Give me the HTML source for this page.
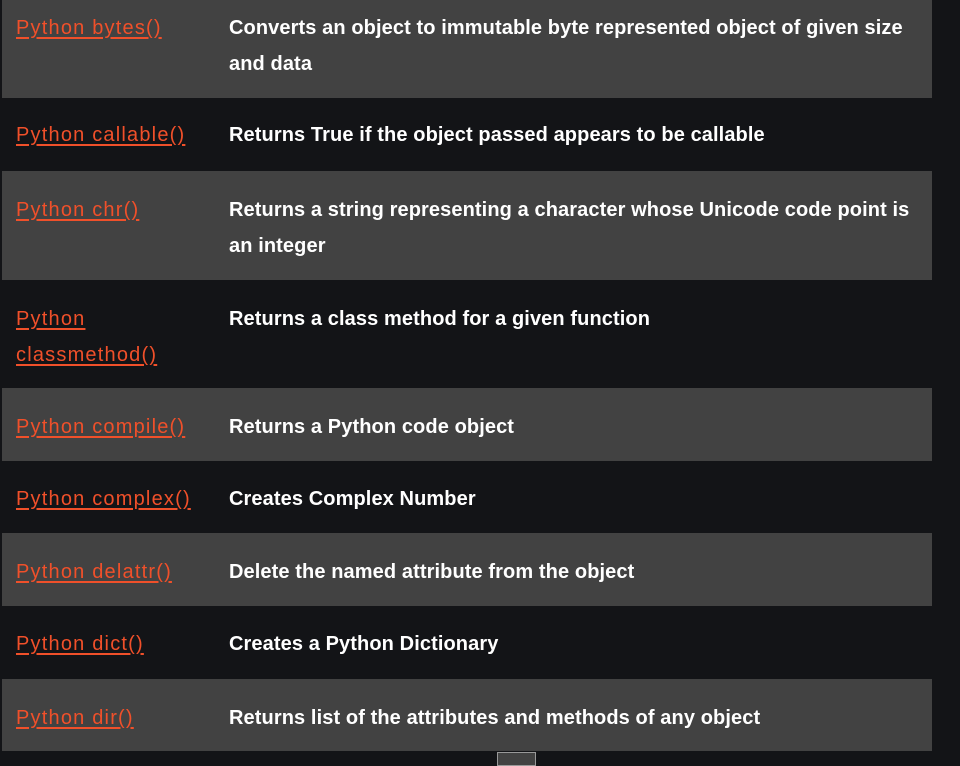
<!DOCTYPE html>
<html><head><meta charset="utf-8"><style>
body{margin:0;width:960px;height:762px;background:#131417;overflow:hidden;position:relative;font-family:"Liberation Sans",sans-serif;color:#fff;}
.r{position:absolute;left:2px;width:930px;}
.g{background:#424242;}
.a{position:absolute;left:14px;width:180px;color:#f0502a;text-decoration:underline;text-underline-offset:3px;line-height:36px;font-size:20px;letter-spacing:1.2px;}
.b{position:absolute;left:227px;width:688px;line-height:36px;font-size:20px;font-weight:bold;letter-spacing:0.1px;}
</style></head><body>
<div class="r g" style="top:0;height:98px"><div class="a" style="top:10px">Python bytes()</div><div class="b" style="top:10px">Converts an object to immutable byte represented object of given size and data</div></div>
<div class="r" style="top:98px;height:73px"><div class="a" style="top:19px">Python callable()</div><div class="b" style="top:19px">Returns True if the object passed appears to be callable</div></div>
<div class="r g" style="top:171px;height:109px"><div class="a" style="top:21px">Python chr()</div><div class="b" style="top:21px">Returns a string representing a character whose Unicode code point is an integer</div></div>
<div class="r" style="top:280px;height:108px"><div class="a" style="top:21px;width:120px">Python classmethod()</div><div class="b" style="top:21px">Returns a class method for a given function</div></div>
<div class="r g" style="top:388px;height:73px"><div class="a" style="top:21px">Python compile()</div><div class="b" style="top:21px">Returns a Python code object</div></div>
<div class="r" style="top:461px;height:72px"><div class="a" style="top:20px">Python complex()</div><div class="b" style="top:20px">Creates Complex Number</div></div>
<div class="r g" style="top:533px;height:73px"><div class="a" style="top:21px">Python delattr()</div><div class="b" style="top:21px">Delete the named attribute from the object</div></div>
<div class="r" style="top:606px;height:73px"><div class="a" style="top:20px">Python dict()</div><div class="b" style="top:20px">Creates a Python Dictionary</div></div>
<div class="r g" style="top:679px;height:72px"><div class="a" style="top:21px">Python dir()</div><div class="b" style="top:21px">Returns list of the attributes and methods of any object</div></div>
<div style="position:absolute;left:497px;top:752px;width:37px;height:12px;border:1px solid #999;background:#424242;"></div>
</body></html>
